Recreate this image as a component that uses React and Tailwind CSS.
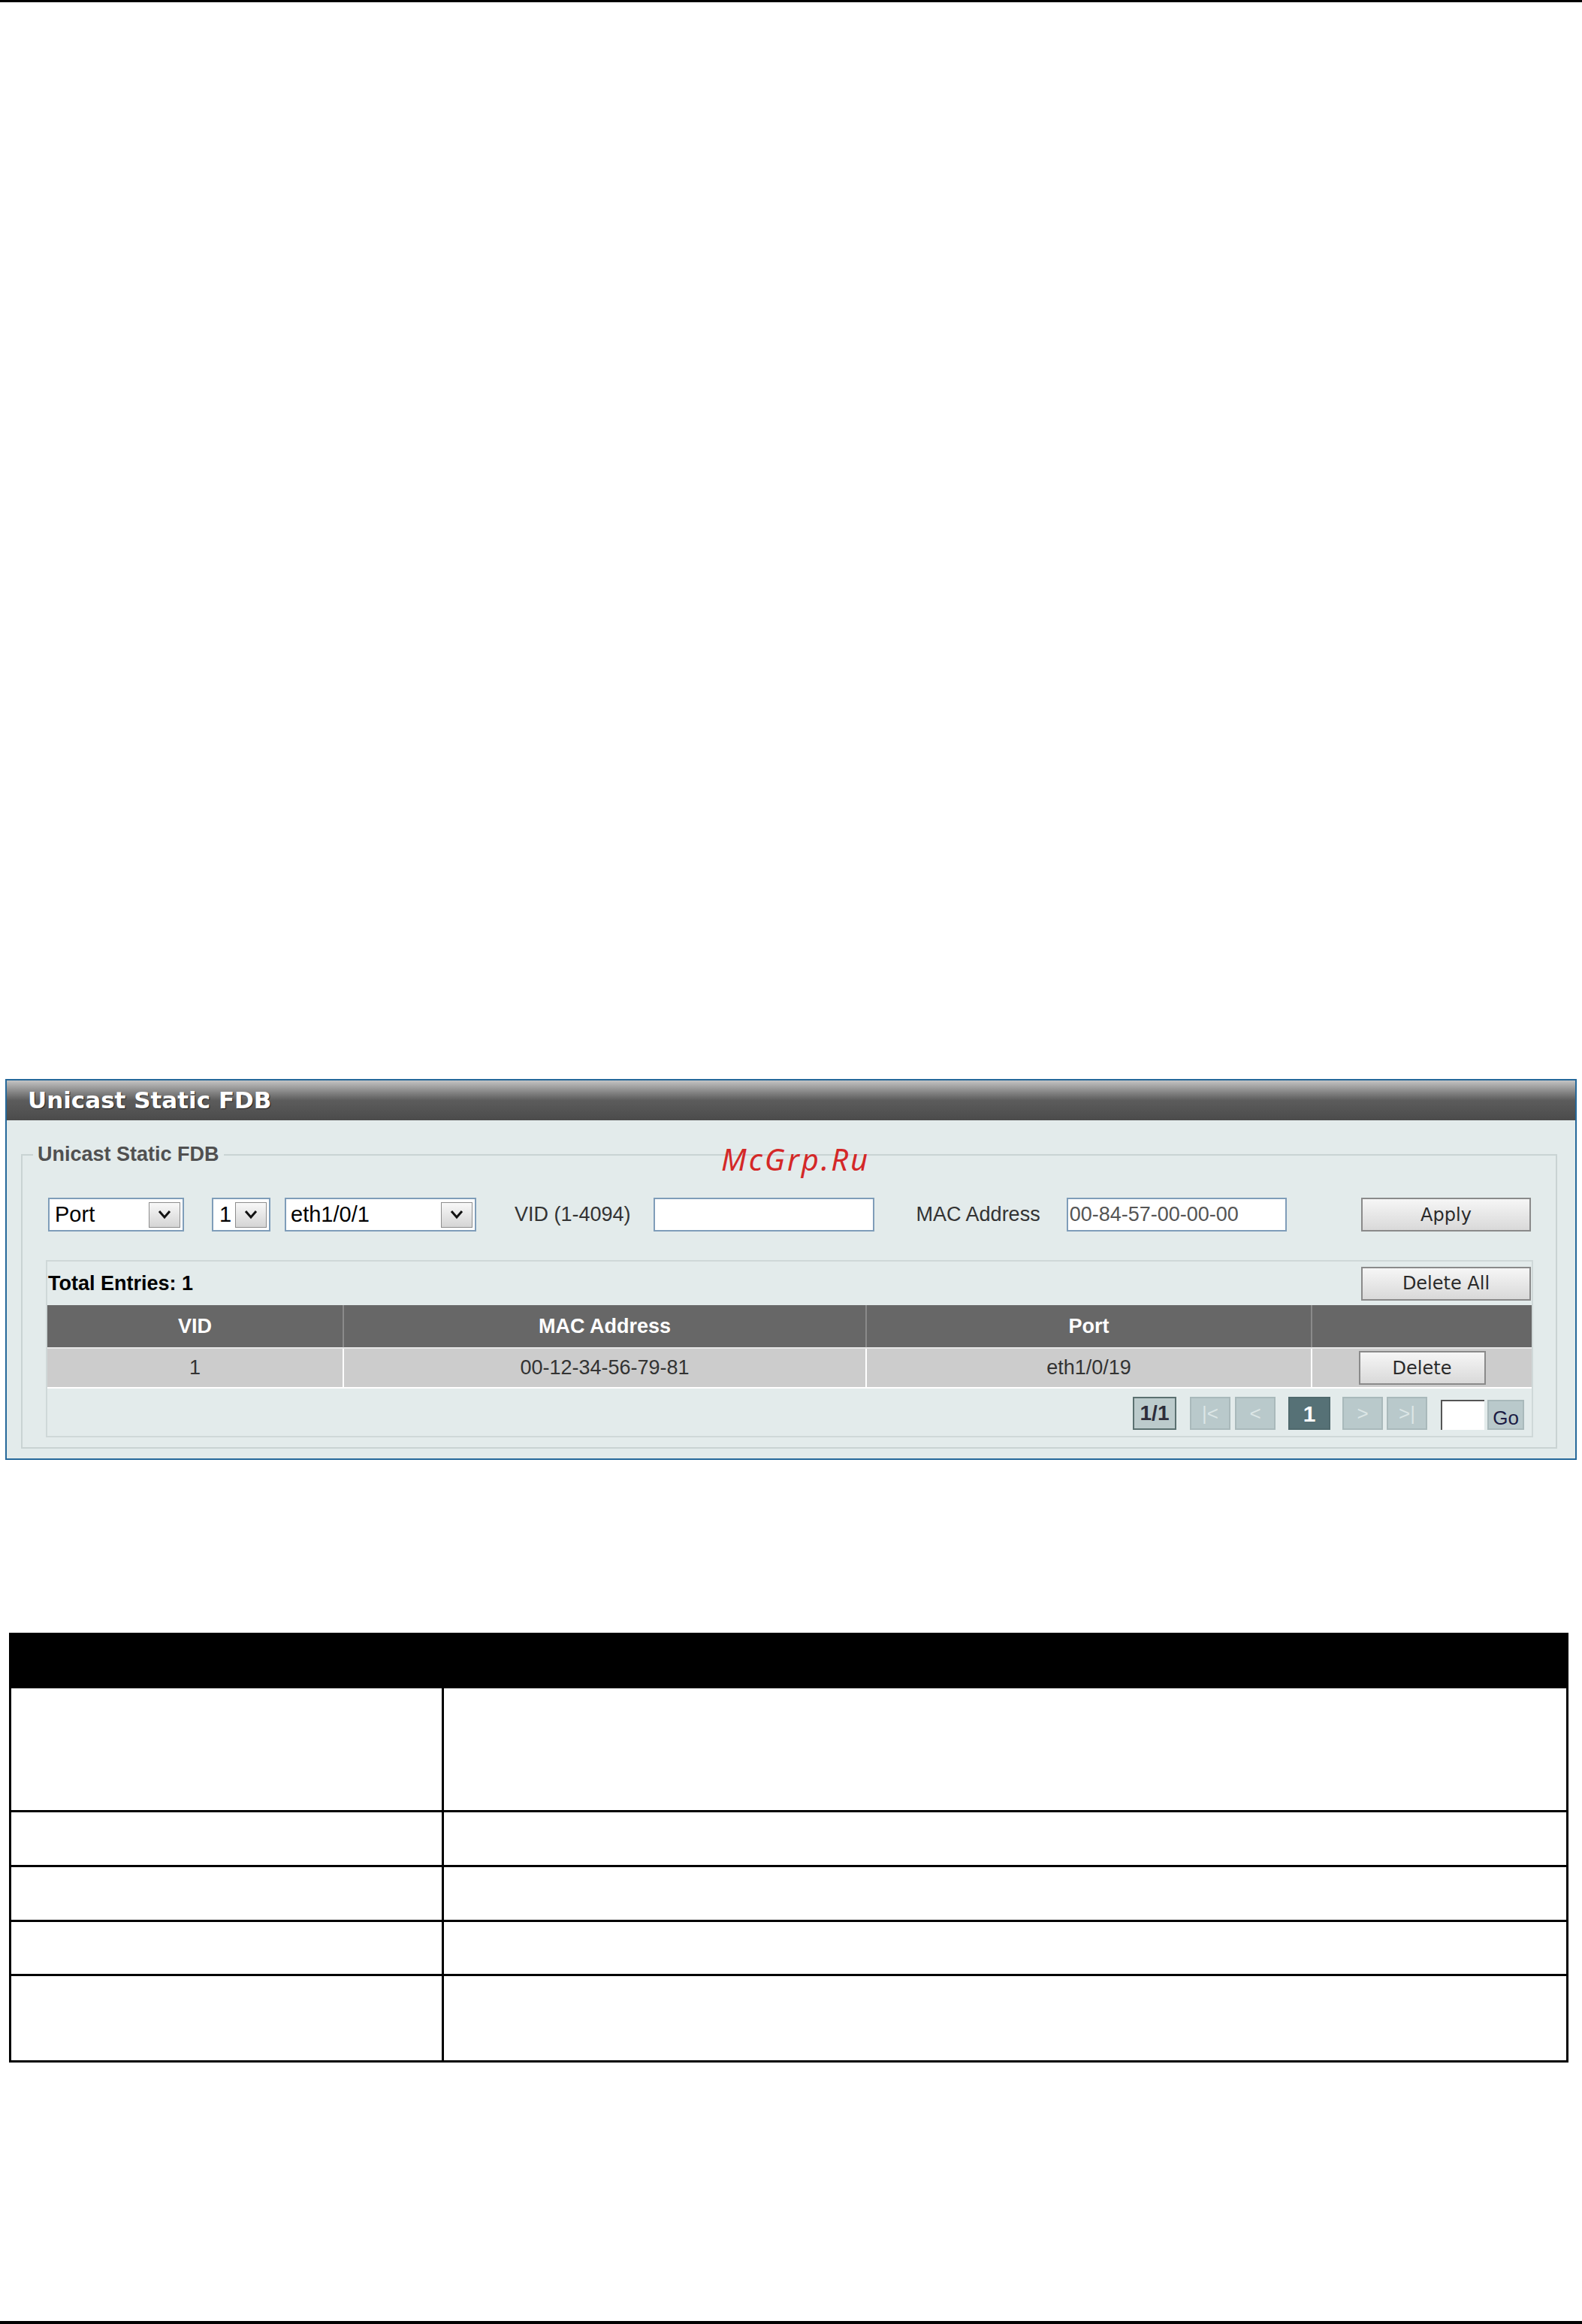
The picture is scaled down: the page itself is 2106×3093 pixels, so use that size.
import React from "react"

const arial = "font-['Liberation_Sans',Arial,sans-serif]"
const tahoma = "font-['DejaVu_Sans',Verdana,sans-serif]"

function Chevron() {
    return (
        <svg width="18" height="13" viewBox="0 0 18 13">
            <polyline points="2,2 9,10 16,2" fill="none" stroke="#111" strokeWidth="3" />
        </svg>
    )
}

function Select({ className, value, textPad }) {
    return (
        <div className={`flex h-[45px] shrink-0 items-center justify-between border-2 border-[#7f9db9] bg-white pr-[3px] ${className}`}>
            <span className={`${arial} ${textPad} text-[29px] leading-none text-black`}>{value}</span>
            <div className="flex h-[34px] w-[42px] items-center justify-center border border-[#8d8d8d] bg-linear-to-b from-[#f8f8f8] to-[#d5d5d5]">
                <Chevron />
            </div>
        </div>
    )
}

function GrayButton({ className, children }) {
    return (
        <div className={`flex h-[45px] shrink-0 items-center justify-center border-2 border-[#8a8a8a] bg-linear-to-b from-[#f6f6f6] to-[#d9d9d9] ${tahoma} text-[24px] text-[#2a2a2a] ${className}`}>
            {children}
        </div>
    )
}

function PageBox({ className, children }) {
    return (
        <div className={`flex h-[44px] shrink-0 items-center justify-center border-2 ${className}`}>
            {children}
        </div>
    )
}

export default function App() {
    return (
        <div className="relative flex h-[3093px] w-[2106px] flex-col overflow-hidden bg-white">
            <div className="h-[3px] bg-black" />

            {/* Unicast Static FDB panel */}
            <div className="ml-[7px] mt-[1433px] w-[2092px] border-2 border-[#25689a] bg-[#e3ebeb]">
                <div className="flex h-[53px] items-center bg-linear-to-b from-[#c4c4c4] via-[#5c5c5c] to-[#4b4b4b] pl-[28px]">
                    <span className={`${tahoma} text-[31px] font-bold leading-none text-white [text-shadow:1px_1px_1px_#222]`}>
                        Unicast Static FDB
                    </span>
                </div>

                <div className="pb-[13px] pl-[19px] pt-[45px]">
                    <div className="relative w-[2045px] border-2 border-[#c9d3d3] pb-[13px] pl-[31px] pr-[30px] pt-[56px]">
                        <span className={`absolute left-[14px] top-[-17px] bg-[#e3ebeb] px-[6px] ${arial} text-[27px] font-bold leading-[30px] text-[#505050]`}>
                            Unicast Static FDB
                        </span>

                        <div className="flex h-[45px] items-center">
                            <Select className="ml-[3px] w-[181px]" value="Port" textPad="pl-[7px]" />
                            <Select className="ml-[37px] w-[78px]" value="1" textPad="pl-[8px]" />
                            <Select className="ml-[19px] w-[255px]" value="eth1/0/1" textPad="pl-[6px]" />
                            <span className={`ml-[51px] ${arial} text-[27px] text-[#333]`}>VID (1-4094)</span>
                            <div className="ml-[30px] h-[45px] w-[294px] border-2 border-[#7f9db9] bg-white" />
                            <span className={`ml-[56px] ${arial} text-[27px] text-[#333]`}>MAC Address</span>
                            <div className="ml-[35px] flex h-[45px] w-[293px] items-center border-2 border-[#7f9db9] bg-white pl-[2px]">
                                <span className={`${arial} text-[27px] text-[#555]`}>00-84-57-00-00-00</span>
                            </div>
                            <GrayButton className="ml-auto mr-[3px] w-[226px]">Apply</GrayButton>
                        </div>

                        <div className="mt-[38px] border-2 border-[#cfd8d8]">
                            <div className="flex h-[58px] items-center justify-between pl-[1px]">
                                <span className={`${arial} text-[27px] font-bold text-black`}>Total Entries: 1</span>
                                <GrayButton className="mr-[1px] w-[226px]">Delete All</GrayButton>
                            </div>

                            <div className={`grid h-[56px] grid-cols-[393px_696px_593px_294px] bg-[#676767] ${arial} text-[27px] font-bold text-white`}>
                                <div className="flex items-center justify-center">VID</div>
                                <div className="flex items-center justify-center border-l-2 border-[#8a8a8a]">MAC Address</div>
                                <div className="flex items-center justify-center border-l-2 border-[#8a8a8a]">Port</div>
                                <div className="border-l-2 border-[#8a8a8a]" />
                            </div>
                            <div className={`grid h-[55px] grid-cols-[393px_696px_593px_294px] border-y-2 border-t-[#e6e6e6] border-b-white bg-[#cccccc] ${arial} text-[27px] text-[#333]`}>
                                <div className="flex items-center justify-center">1</div>
                                <div className="flex items-center justify-center border-l-2 border-white">00-12-34-56-79-81</div>
                                <div className="flex items-center justify-center border-l-2 border-white">eth1/0/19</div>
                                <div className="flex items-center justify-center border-l-2 border-white">
                                    <GrayButton className="w-[169px]">Delete</GrayButton>
                                </div>
                            </div>

                            <div className={`flex h-[63px] items-end justify-end pb-[8px] pr-[10px] ${arial}`}>
                                <PageBox className="w-[58px] border-[#5b7070] bg-[#bccbcc] text-[28px] font-bold text-[#2d2d3a]">1/1</PageBox>
                                <PageBox className="ml-[18px] w-[54px] border-[#a9b9bb] bg-[#b9c9cb] text-[26px] text-[#dce6e6]">|&lt;</PageBox>
                                <PageBox className="ml-[6px] w-[54px] border-[#a9b9bb] bg-[#b9c9cb] text-[26px] text-[#dce6e6]">&lt;</PageBox>
                                <PageBox className="ml-[17px] w-[56px] border-[#4f696d] bg-[#567176] text-[30px] font-bold text-white">1</PageBox>
                                <PageBox className="ml-[16px] w-[54px] border-[#a9b9bb] bg-[#b9c9cb] text-[26px] text-[#dce6e6]">&gt;</PageBox>
                                <PageBox className="ml-[5px] w-[54px] border-[#a9b9bb] bg-[#b9c9cb] text-[26px] text-[#dce6e6]">&gt;|</PageBox>
                                <div className="ml-[18px] h-[40px] w-[58px] border-l-2 border-t-2 border-[#555] bg-white" />
                                <div className="ml-[4px] flex h-[40px] w-[49px] items-end justify-center border-2 border-[#a9b9bb] bg-[#b9c9cb] pb-[1px] text-[26px] leading-none text-[#1c1c44]">
                                    Go
                                </div>
                            </div>
                        </div>
                    </div>
                </div>
            </div>

            {/* Parameter description table (empty) */}
            <div className="ml-[12px] mt-[230px] w-[2076px] border-x-[3px] border-b-[3px] border-black">
                <div className="h-[74px] bg-black" />
                {[162, 73, 73, 72, 115].map((h, i) => (
                    <div
                        key={i}
                        className={`flex ${i > 0 ? "border-t-[3px] border-black" : ""}`}
                        style={{ height: h }}
                    >
                        <div className="w-[576px] border-r-[3px] border-black" />
                        <div className="flex-1" />
                    </div>
                ))}
            </div>

            <div className="mt-auto h-[4px] bg-black" />

            <span className="absolute left-[960px] top-[1520px] font-['Noto_Sans',sans-serif] text-[40px] italic leading-[46px] tracking-[3px] text-[#d42828]">
                McGrp.Ru
            </span>
        </div>
    )
}
